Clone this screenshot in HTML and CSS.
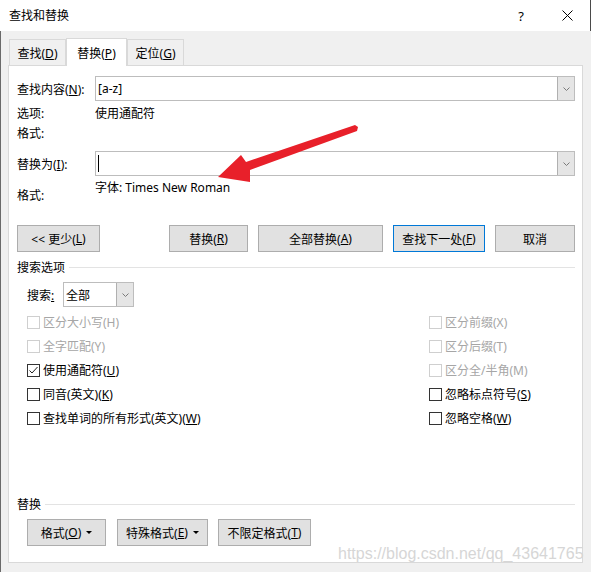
FILE: index.html
```html
<!DOCTYPE html>
<html lang="zh-CN">
<head>
<meta charset="utf-8">
<title>查找和替换</title>
<link rel="stylesheet" href="styles.css">
</head>
<body>
<div class="window">
  <div class="titlebar">
    <span class="title">查找和替换</span>
    <span class="tb-btn help">?</span>
    <span class="tb-btn close">
      <svg width="11" height="11" viewBox="0 0 11 11"><path d="M0.5 0.5 L10.5 10.5 M10.5 0.5 L0.5 10.5" stroke="#000" stroke-width="1" fill="none"/></svg>
    </span>
  </div>
  <div class="main">
    <div class="tabs">
      <div class="tab">查找(<u>D</u>)</div>
      <div class="tab active">替换(<u>P</u>)</div>
      <div class="tab">定位(<u>G</u>)</div>
    </div>
    <div class="panel">
      <div class="field-row">
        <span class="lbl">查找内容(<u>N</u>):</span>
        <div class="combo">
          <span class="combo-text">[a-z]</span>
          <span class="drop"><svg width="7" height="4" viewBox="0 0 7 4"><path d="M0.5 0.5 L3.5 3.5 L6.5 0.5" stroke="#7a7a7a" fill="none"/></svg></span>
        </div>
      </div>
      <div class="info-row first"><span class="lbl">选项:</span><span>使用通配符</span></div>
      <div class="info-row"><span class="lbl">格式:</span></div>
      <div class="field-row replace">
        <span class="lbl">替换为(<u>I</u>):</span>
        <div class="combo">
          <span class="caret"></span>
          <span class="drop"><svg width="7" height="4" viewBox="0 0 7 4"><path d="M0.5 0.5 L3.5 3.5 L6.5 0.5" stroke="#7a7a7a" fill="none"/></svg></span>
        </div>
      </div>
      <div class="format-row">
        <span class="lbl">格式:</span>
        <span class="fmt-val">字体: Times New Roman</span>
      </div>
      <div class="btn-row">
        <button class="btn w83">&lt;&lt; 更少(<u>L</u>)</button>
        <span class="spacer"></span>
        <button class="btn w79">替换(<u>R</u>)</button>
        <button class="btn w125">全部替换(<u>A</u>)</button>
        <button class="btn w92 default">查找下一处(<u>F</u>)</button>
        <button class="btn w80">取消</button>
      </div>
      <div class="group-title"><span>搜索选项</span><span class="line"></span></div>
      <div class="search-row">
        <span class="search-lbl">搜索<u>:</u></span>
        <div class="select">
          <span class="select-text">全部</span>
          <span class="drop"><svg width="7" height="4" viewBox="0 0 7 4"><path d="M0.5 0.5 L3.5 3.5 L6.5 0.5" stroke="#7a7a7a" fill="none"/></svg></span>
        </div>
      </div>
      <div class="options">
        <div class="col left">
          <div class="chk disabled"><span class="box"></span><span>区分大小写(H)</span></div>
          <div class="chk disabled"><span class="box"></span><span>全字匹配(Y)</span></div>
          <div class="chk"><span class="box"><svg width="11" height="11" viewBox="0 0 11 11"><path d="M1.5 5.5 L4 8 L9.5 2" stroke="#222" stroke-width="1" fill="none"/></svg></span><span>使用通配符(<u>U</u>)</span></div>
          <div class="chk"><span class="box"></span><span>同音(英文)(<u>K</u>)</span></div>
          <div class="chk"><span class="box"></span><span>查找单词的所有形式(英文)(<u>W</u>)</span></div>
        </div>
        <div class="col right">
          <div class="chk disabled"><span class="box"></span><span>区分前缀(X)</span></div>
          <div class="chk disabled"><span class="box"></span><span>区分后缀(T)</span></div>
          <div class="chk disabled"><span class="box"></span><span>区分全/半角(M)</span></div>
          <div class="chk"><span class="box"></span><span>忽略标点符号(<u>S</u>)</span></div>
          <div class="chk"><span class="box"></span><span>忽略空格(<u>W</u>)</span></div>
        </div>
      </div>
      <div class="group-title second"><span>替换</span><span class="line"></span></div>
      <div class="btn-row bottom">
        <button class="btn w79">格式(<u>O</u>)<span class="tri"></span></button>
        <button class="btn w91">特殊格式(<u>E</u>)<span class="tri"></span></button>
        <button class="btn w93">不限定格式(<u>T</u>)</button>
      </div>
    </div>
  </div>
  <svg class="arrow" width="591" height="572" viewBox="0 0 591 572">
    <polygon points="218,177 241,155 246,162 355,125 358,127 357,131 250,170 250,182" fill="#e8202a"/>
  </svg>
  <div class="watermark">https://blog.csdn.net/qq_43641765</div>
</div>
</body>
</html>
```

FILE: styles.css
```css
* { box-sizing: border-box; }

body {
  margin: 0;
  background: #f0f0f0;
  font-family: "Noto Sans", "Noto Sans CJK SC", sans-serif;
  font-size: 12px;
  color: #000;
}

u { text-decoration: underline; text-underline-offset: 1px; }

.window {
  position: relative;
  width: 591px;
  height: 572px;
  background: #f0f0f0;
  overflow: hidden;
}

.titlebar {
  height: 31px;
  background: #fff;
  display: flex;
  align-items: center;
  padding-left: 9px;
  border-right: 1px solid #4a4a4a;
}

.title { font-size: 12px; line-height: 16px; }

.tb-btn {
  display: flex;
  align-items: center;
  justify-content: center;
  width: 46px;
  height: 31px;
}

.help { margin-left: auto; font-size: 13px; font-family: "Noto Sans", sans-serif; }

.main {
  height: 541px;
  border-left: 1px solid #6a6a6a;
  padding-left: 7px;
}

.tabs {
  display: flex;
  align-items: flex-end;
  height: 34px;
  padding-left: 1px;
}

.tab {
  height: 26px;
  width: 57px;
  display: flex;
  align-items: center;
  justify-content: center;
  padding-top: 1px;
  background: #f0f0f0;
  border: 1px solid #d9d9d9;
  border-bottom: none;
}

.tab.active {
  width: 61px;
  height: 28px;
  margin-bottom: -1px;
  background: #fff;
  position: relative;
  z-index: 1;
  border-color: #d9d9d9;
}

.panel {
  width: 575px;
  height: 498px;
  background: #fff;
  border: 1px solid #d9d9d9;
  padding: 10px 7px 0 8px;
}

.field-row {
  display: flex;
  align-items: center;
  height: 25px;
}

.field-row.replace { margin-top: 8px; }

.lbl { width: 78px; flex: none; }

.combo {
  flex: 1;
  height: 25px;
  border: 1px solid #bdbdbd;
  display: flex;
  align-items: center;
}

.combo-text { padding-left: 2px; flex: 1; }

.caret {
  width: 1px;
  height: 17px;
  background: #000;
  margin-left: 2px;
  margin-right: auto;
}

.drop {
  width: 17px;
  height: 100%;
  background: #e5e5e5;
  border-left: 1px solid #b0b0b0;
  display: flex;
  align-items: center;
  justify-content: center;
  flex: none;
}

.info-row {
  display: flex;
  align-items: center;
  height: 20px;
}

.info-row.first { margin-top: 2px; }

.format-row {
  display: flex;
  height: 28px;
}

.format-row .lbl { align-self: flex-end; line-height: 16px; }
.fmt-val { align-self: flex-start; line-height: 16px; padding-top: 4px; }

.btn-row {
  display: flex;
  gap: 10px;
  height: 27px;
  margin-top: 21px;
}

.spacer { flex: 1; }

.btn {
  height: 27px;
  background: #e1e1e1;
  border: 1px solid #adadad;
  font: inherit;
  color: #000;
  padding: 0;
  display: flex;
  align-items: center;
  justify-content: center;
}

.btn.default { border-color: #0078d7; }

.w79 { width: 79px; }
.w80 { width: 80px; }
.w83 { width: 83px; }
.w91 { width: 91px; }
.w92 { width: 92px; }
.w93 { width: 93px; }
.w125 { width: 125px; }

.tri {
  width: 0;
  height: 0;
  border-left: 3px solid transparent;
  border-right: 3px solid transparent;
  border-top: 3px solid #000;
  margin-left: 5px;
}

.group-title {
  display: flex;
  align-items: center;
  height: 16px;
  margin-top: 7px;
  gap: 4px;
}

.group-title .line {
  flex: 1;
  height: 1px;
  background: #e3e3e3;
}

.group-title.second { margin-top: 66px; }

.search-row {
  display: flex;
  align-items: center;
  height: 25px;
  margin-top: 7px;
  padding-left: 10px;
}

.search-lbl { width: 36px; }

.select {
  width: 71px;
  height: 25px;
  border: 1px solid #bdbdbd;
  display: flex;
  align-items: center;
}

.select-text { flex: 1; padding-left: 2px; }

.options {
  display: flex;
  margin-top: 3px;
  padding-left: 10px;
}

.col.left { width: 402px; }

.chk {
  display: flex;
  align-items: center;
  height: 24px;
  gap: 3px;
}

.box {
  width: 13px;
  height: 13px;
  border: 1px solid #333;
  background: #fff;
  display: flex;
  align-items: center;
  justify-content: center;
  flex: none;
}

.chk.disabled { color: #a6a6a6; }
.chk.disabled .box { border-color: #cfcfcf; }

.btn-row.bottom {
  margin-top: 7px;
  padding-left: 10px;
  gap: 11px;
}

.btn-row.bottom .w93 { margin-left: -1px; }

.arrow {
  position: absolute;
  left: 0;
  top: 0;
  pointer-events: none;
}

.watermark {
  position: absolute;
  left: 338px;
  top: 545px;
  font-family: "Liberation Sans", Arial, sans-serif;
  font-size: 16px;
  line-height: 18px;
  color: #d6d6d6;
  white-space: nowrap;
}
```
